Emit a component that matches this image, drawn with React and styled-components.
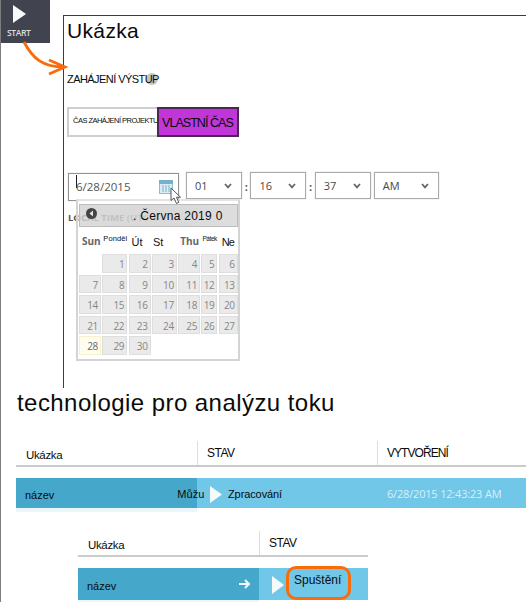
import React from "react";
import styled, { createGlobalStyle } from "styled-components";

const Global = createGlobalStyle`
  * { box-sizing: border-box; }
  body { margin: 0; background: #fff; font-family: "Liberation Sans", Arial, sans-serif; color: #0b0b0b; }
`;

const Page = styled.main`
  position: relative;
  width: 526px;
  height: 602px;
  overflow: hidden;
  background: #fff;
  border-left: 1px solid #7d7d7d;
`;
const Text = styled.span`
  display: block;
  white-space: pre;
  font-family: ${(p) => (p.$ui ? '"Open Sans", "Noto Sans", sans-serif' : "inherit")};
  font-size: ${(p) => p.$size}px;
  line-height: ${(p) => p.$line || 16}px;
  letter-spacing: ${(p) => p.$track || 0}px;
  font-weight: ${(p) => p.$weight || 400};
  color: ${(p) => p.$color || "#0b0b0b"};
  margin-top: ${(p) => p.$top || 0}px;
  margin-left: ${(p) => p.$left || 0}px;
`;
const IconSlot = styled.div`
  margin-top: ${(p) => p.$top || 0}px;
  margin-left: ${(p) => p.$left || 0}px;
`;
const Upper = styled.section`
  display: flex;
  height: 388px;
`;
const Rail = styled.div`
  width: 62px;
  flex: none;
`;
const StartTile = styled.div`
  width: 50px;
  height: 43px;
  margin-left: -1px;
  padding-top: 5px;
  background: #41444f;
  display: flex;
  flex-direction: column;
  svg { display: block; margin-left: 13px; }
`;
const FlowArrow = styled.svg`
  position: absolute;
  left: -1px;
  top: 0;
  z-index: 4;
`;
const Panel = styled.div`
  position: relative;
  flex: 1;
  margin-top: 15px;
  border-top: 1px solid #3c3c3c;
  border-left: 1px solid #3c3c3c;
  padding-left: 3px;
`;
const Heading = styled.div`
  display: flex;
  height: 54px;
`;
const OutputLabel = styled.div`
  display: flex;
  align-items: center;
  height: 18px;
`;
const InfoDot = styled.i`
  width: 12px;
  height: 12px;
  border-radius: 50%;
  background: #c4c4c4;
  margin-left: -13px;
  filter: blur(0.7px);
`;
const Front = styled.div`
  position: relative;
  z-index: 1;
`;
const Toggle = styled.div`
  display: flex;
  width: 172px;
  height: 30px;
  margin-top: 19px;
`;
const Option = styled.div`
  width: ${(p) => p.$w}px;
  border: 2px solid ${(p) => (p.$on ? "#4a2853" : "#cecece")};
  border-right-width: ${(p) => (p.$on ? 2 : 0)}px;
  background: ${(p) => (p.$on ? "#c136d8" : "#fff")};
`;
const Pickers = styled.div`
  display: flex;
  height: 28px;
  margin-top: 35px;
`;
const Field = styled.div`
  display: flex;
  align-items: center;
  justify-content: space-between;
  width: ${(p) => p.$w}px;
  height: ${(p) => (p.$date ? 28 : 27)}px;
  margin-left: ${(p) => p.$gap || 0}px;
  margin-top: ${(p) => p.$top || 0}px;
  padding: 0 ${(p) => p.$pr || 9}px 0 ${(p) => p.$pl || 8}px;
  border: 1px solid ${(p) => (p.$date ? "#939393" : "#aaa")};
  box-shadow: 0 0 1px #bbb;
  background: #fff;
`;
const Colon = styled.span`
  width: 8.4px;
  text-align: center;
  font: 700 11px/29px "Open Sans", sans-serif;
  color: #555;
`;
const Caret = styled.i`
  width: 1px;
  height: 13px;
  margin: -4px -2px 0 0;
  background: #222;
`;
const DateText = styled.div`
  display: flex;
`;
const Calendar = styled.div`
  position: absolute;
  z-index: 2;
  left: 12px;
  top: 183px;
  width: 164px;
  height: 162px;
  padding: 3px 1px 0;
  border: 2px solid #d4d4d4;
  border-top-color: #e4e4e4;
  background: linear-gradient(rgba(255, 255, 255, 0.5) 28px, #fff 28px);
`;
const MonthBar = styled.div`
  display: flex;
  width: 159px;
  height: 23px;
  padding: 3px 0 0 6px;
  border: 1px solid #bcbcbc;
  background: linear-gradient(90deg, rgba(195,195,195,.6), rgba(205,205,205,.75) 35%, #d9d9d9 60%, #dedede);
  svg { display: block; }
`;
const columns = "22px 25px 22px 25px 22px 16px 19px";
const DayNames = styled.div`
  display: grid;
  grid-template-columns: ${columns};
  column-gap: 1.3px;
  height: 27px;
`;
const Days = styled.div`
  display: grid;
  grid-template-columns: ${columns};
  grid-auto-rows: 18.5px;
  gap: 2px 1.3px;
`;
const Day = styled.div`
  border: 1px solid ${(p) => (p.$blank ? "transparent" : p.$today ? "#f8f2cc" : "#dedede")};
  background: ${(p) => (p.$blank ? "transparent" : p.$today ? "#fffdf0" : "#eaeaea")};
  color: ${(p) => (p.$today ? "#686868" : "#868686")};
  padding-right: 2px;
  text-align: right;
  font: 500 10px/18px "Open Sans", sans-serif;
  letter-spacing: -0.3px;
`;
const Pointer = styled.svg`
  position: absolute;
  z-index: 5;
  left: 106px;
  top: 171px;
`;
const Title = styled.div`
  height: 53px;
  padding-left: 16px;
`;
const Table = styled.section`
  width: ${(p) => p.$w}px;
  margin-left: ${(p) => p.$left}px;
  margin-top: ${(p) => p.$top || 0}px;
`;
const Head = styled.div`
  display: grid;
  grid-template-columns: ${(p) => p.$cols};
  height: 26px;
  border-bottom: 2px solid #cbcbcb;
`;
const HeadCell = styled.div`
  padding-left: ${(p) => (p.$rule ? 9 : 10)}px;
  border-left: ${(p) => (p.$rule ? "1px solid #dedede" : "0")};
`;
const Row = styled.div`
  display: grid;
  grid-template-columns: ${(p) => p.$cols};
  height: 30px;
  margin-top: 11px;
`;
const Cell = styled.div`
  display: flex;
  align-items: flex-start;
  position: relative;
  z-index: ${(p) => (p.$name ? 1 : 0)};
  min-width: 0;
  background: ${(p) => (p.$name ? "#45a8ca" : "#70c7e8")};
  box-shadow: ${(p) => (p.$name ? "0 4px 0 #ebf6fb" : "none")};
  padding-left: ${(p) => p.$pad || 9}px;
  svg { display: block; flex: none; }
`;
const Marked = styled.div`
  flex: none;
  width: 65px;
  height: 34px;
  margin: -2px 0 0 2px;
  padding: 2px 0 0 5px;
  border: 3px solid #fa6b0a;
  border-radius: 10px;
`;

const Play = ({ w = 13, h = 18 }) => (
  <svg width={w} height={h} viewBox="0 0 13 18" preserveAspectRatio="none"><path d="M0 0L13 9L0 18Z" fill="#f5fbfd" /></svg>
);
const Chevron = () => (
  <svg width="8" height="6" viewBox="0 0 8 6"><path d="M1 1L4 4.3L7 1" fill="none" stroke="#666" strokeWidth="1.8" /></svg>
);
const CalendarIcon = () => (
  <svg width="14" height="14" viewBox="0 0 14 14">
    <rect x=".5" y=".5" width="13" height="13" fill="#d8edf5" stroke="#8dbdd2" />
    <rect width="14" height="4" fill="#76b0cb" />
    <path d="M4 5V12M7 5V12M10 5V12" stroke="#8fc0d5" strokeWidth="1.3" />
  </svg>
);

const times = [
  { value: "01", w: 56, gap: 7 },
  { value: "16", w: 56, colon: true },
  { value: "37", w: 56, colon: true },
  { value: "AM", w: 65, gap: 3 },
];
const names = [
  { t: "Sun", ui: true, size: 10, top: 6, left: 3 },
  { t: "Ponděl", size: 7.5, top: 4, left: 1, track: 0.1 },
  { t: "Út", size: 11, top: 7, left: 3 },
  { t: "St", size: 11, top: 7, left: 1 },
  { t: "Thu", ui: true, size: 10, top: 6, left: 2 },
  { t: "Pátek", size: 6.5, top: 4, left: 1, track: -0.45 },
  { t: "Ne", size: 11, top: 7, left: 3, track: -0.9 },
];
const dates = Array.from({ length: 31 }, (_, i) => i);

const COLS1 = "181px 180px 1fr";
const COLS2 = "181px 1fr";

export default function App() {
  return (
    <Page>
      <Global />
      <Upper>
        <Rail>
          <StartTile>
            <Play />
            <Text $ui $size={8.5} $weight={600} $color="#dedee2" $left={7} $top={2} $track={-0.4}>START</Text>
          </StartTile>
        </Rail>
        <Panel>
          <Heading><Text $size={21} $line={30} $track={0.35}>Ukázka</Text></Heading>
          <OutputLabel>
            <Front><Text $size={11} $track={-0.56}>ZAHÁJENÍ VÝSTUP</Text></Front>
            <InfoDot />
          </OutputLabel>
          <Toggle>
            <Option $w={90}><Text $size={7.5} $top={4} $left={4} $track={-0.52}>ČAS ZAHÁJENÍ PROJEKTU</Text></Option>
            <Option $w={82} $on><Text $size={12.5} $top={6} $left={3} $track={-0.95}>VLASTNÍ ČAS</Text></Option>
          </Toggle>
          <Pickers>
            <Field $w={111} $date $gap={1} $top={1} $pl={7} $pr={5}>
              <DateText>
                <Caret />
                <Text $ui $size={11.5} $weight={500} $color="#555" $left={1}>6/28/2015</Text>
              </DateText>
              <CalendarIcon />
            </Field>
            {times.map((t) => (
              <React.Fragment key={t.value}>
                {t.colon && <Colon>:</Colon>}
                <Field $w={t.w} $gap={t.gap}>
                  <Text $ui $size={11} $weight={500} $color="#484848">{t.value}</Text>
                  <Chevron />
                </Field>
              </React.Fragment>
            ))}
          </Pickers>
          <Text $ui $size={9.5} $weight={700} $color="#555" $top={10} $left={1}>LOCAL TIME (UTC -07:00)</Text>
          <Calendar>
            <MonthBar>
              <svg width="11" height="11" viewBox="0 0 11 11"><circle cx="5.5" cy="5.5" r="5.5" fill="#444" /><path d="M7 2.5L3.5 5.5L7 8.5Z" fill="#e4e4e4" /></svg>
              <Text $size={12} $left={36} $track={0.28}>. Června 2019 0</Text>
            </MonthBar>
            <DayNames>
              {names.map((n) => (
                <Text key={n.t} $ui={n.ui} $size={n.size} $weight={n.ui ? 700 : 400} $color={n.ui ? "#666" : "#111"} $top={n.top} $left={n.left} $track={n.track}>{n.t}</Text>
              ))}
            </DayNames>
            <Days>
              {dates.map((d) => <Day key={d} $blank={d === 0} $today={d === 28}>{d || ""}</Day>)}
            </Days>
          </Calendar>
          <Pointer width="12" height="18" viewBox="0 0 12 18">
            <path d="M1 1V13.5L4 11L6.5 16.5L8.8 15.4L6.5 10.2H10.5Z" fill="#fff" stroke="#555" />
          </Pointer>
        </Panel>
      </Upper>
      <Title><Text $size={24} $line={30} $track={0.44}>technologie pro analýzu toku</Text></Title>
      <Table $w={510} $left={15}>
        <Head $cols={COLS1}>
          <HeadCell><Text $size={11.5} $top={6} $track={-0.35}>Ukázka</Text></HeadCell>
          <HeadCell $rule><Text $size={12} $top={4} $track={-0.5}>STAV</Text></HeadCell>
          <HeadCell $rule><Text $size={12} $top={4} $track={-0.95}>VYTVOŘENÍ</Text></HeadCell>
        </Head>
        <Row $cols={COLS1}>
          <Cell $name>
            <Text $size={11} $top={9}>název</Text>
            <Text $size={11} $left={123} $top={8}>Můžu</Text>
          </Cell>
          <Cell $pad={13}>
            <IconSlot $top={8}><Play w={12} h={17} /></IconSlot>
            <Text $size={11} $left={6} $top={8} $track={-0.1}>Zpracování</Text>
          </Cell>
          <Cell $pad={10}><Text $ui $size={11} $top={8} $track={-0.18} $color="#d8f0fa">6/28/2015 12:43:23 AM</Text></Cell>
        </Row>
      </Table>
      <Table $w={290} $left={77} $top={23}>
        <Head $cols={COLS2}>
          <HeadCell><Text $size={11.5} $top={6} $track={-0.35}>Ukázka</Text></HeadCell>
          <HeadCell $rule><Text $size={12} $top={4} $track={-0.5}>STAV</Text></HeadCell>
        </Head>
        <Row $cols={COLS2}>
          <Cell $name>
            <Text $size={11} $top={10}>název</Text>
            <IconSlot $left={123} $top={11}>
              <svg width="12" height="10" viewBox="0 0 12 10"><path d="M0 5H10M6 1L10 5L6 9" fill="none" stroke="#eefaff" strokeWidth="2" /></svg>
            </IconSlot>
          </Cell>
          <Cell $pad={13}>
            <IconSlot $top={8}><Play w={12} h={18} /></IconSlot>
            <Marked><Text $size={12} $top={1}>Spuštění</Text></Marked>
          </Cell>
        </Row>
      </Table>
      <FlowArrow width="72" height="82" viewBox="0 0 72 82">
        <path d="M24 42C33 59 43 67 64 67M49 60L65 67L49 74" fill="none" stroke="#fa6b0a" strokeWidth="2.8" />
      </FlowArrow>
    </Page>
  );
}
